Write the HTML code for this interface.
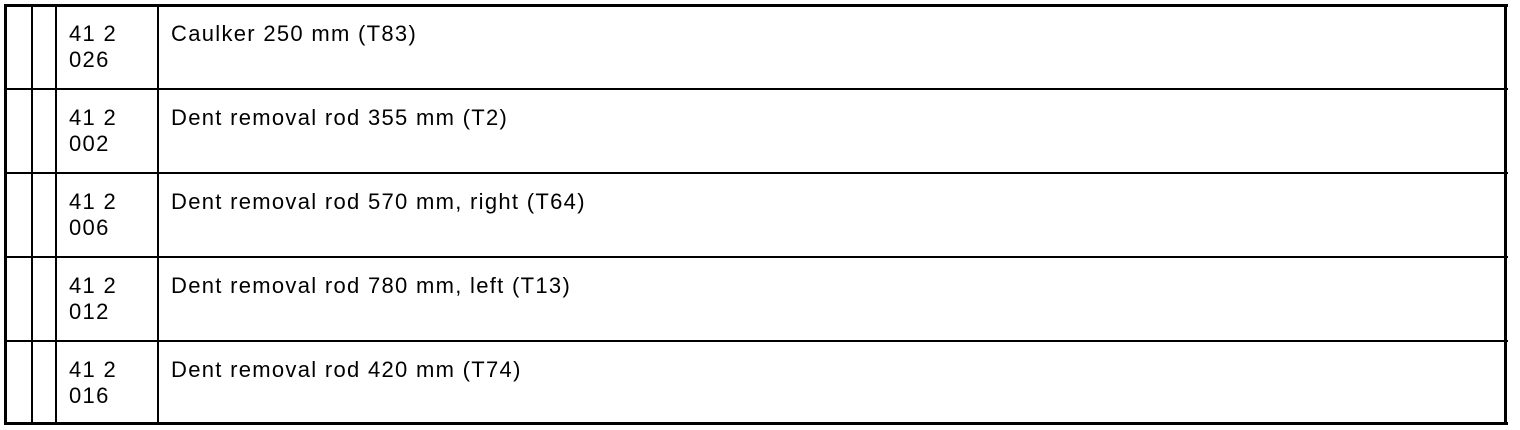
<!DOCTYPE html>
<html><head><style>
body{margin:0;width:1520px;height:430px;background:#fff;position:relative;overflow:hidden;font-family:"Liberation Sans",Arial,sans-serif;font-size:22px;letter-spacing:1.3px;color:#000}
.l{position:absolute;background:#000}
.t{position:absolute;line-height:26px;white-space:nowrap}
</style></head><body>
<div class="l" style="left:4px;top:4px;width:1504px;height:3px"></div>
<div class="l" style="left:4px;top:422px;width:1504px;height:3px"></div>
<div class="l" style="left:4px;top:4px;width:3px;height:421px"></div>
<div class="l" style="left:1504px;top:4px;width:3px;height:421px"></div>
<div class="l" style="left:31px;top:4px;width:2px;height:421px"></div>
<div class="l" style="left:55px;top:4px;width:2px;height:421px"></div>
<div class="l" style="left:157px;top:4px;width:2px;height:421px"></div>
<div class="l" style="left:4px;top:88px;width:1504px;height:2px"></div>
<div class="l" style="left:4px;top:172px;width:1504px;height:2px"></div>
<div class="l" style="left:4px;top:256px;width:1504px;height:2px"></div>
<div class="l" style="left:4px;top:340px;width:1504px;height:2px"></div>

<div class="t" style="left:69px;top:21px">41 2<br>026</div>
<div class="t" style="left:171px;top:21px">Caulker 250 mm (T83)</div>
<div class="t" style="left:69px;top:105px">41 2<br>002</div>
<div class="t" style="left:171px;top:105px">Dent removal rod 355 mm (T2)</div>
<div class="t" style="left:69px;top:189px">41 2<br>006</div>
<div class="t" style="left:171px;top:189px">Dent removal rod 570 mm, right (T64)</div>
<div class="t" style="left:69px;top:273px">41 2<br>012</div>
<div class="t" style="left:171px;top:273px">Dent removal rod 780 mm, left (T13)</div>
<div class="t" style="left:69px;top:357px">41 2<br>016</div>
<div class="t" style="left:171px;top:357px">Dent removal rod 420 mm (T74)</div>
</body></html>
